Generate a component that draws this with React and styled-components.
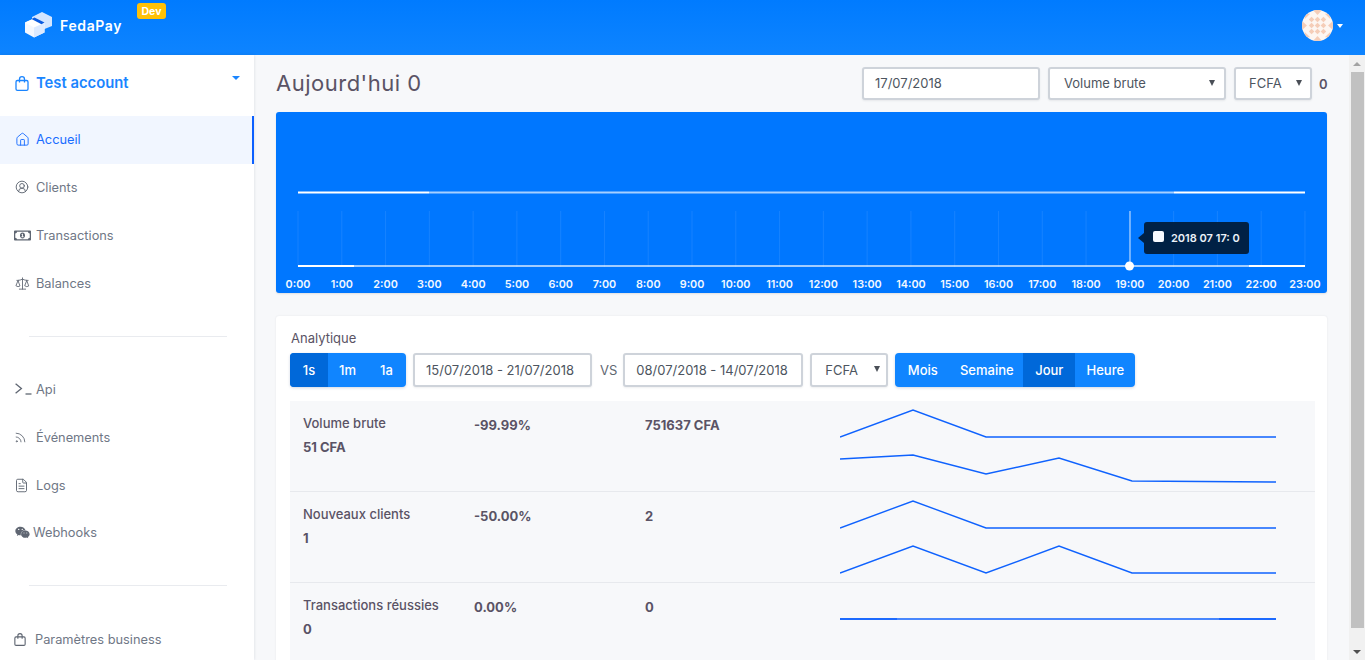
import React from 'react';
import styled, { createGlobalStyle } from 'styled-components';
import { Home, CircleUserRound, Scale, Rss, FileText } from 'lucide-react';
import { FaRegMoneyBillAlt, FaWeixin } from 'react-icons/fa';

const Global = createGlobalStyle`
  html, body { margin: 0; height: 100%; overflow: hidden; }
  body { font-family: Inter, "Noto Sans", sans-serif; color: #5a5365; background: #f7f8fa; }
  * { box-sizing: border-box; }
`;

const Page = styled.div`display: flex; flex-direction: column; height: 660px; width: 1365px; overflow: hidden;`;
const Header = styled.header`
  height: 55px; flex: none; display: flex; align-items: center; justify-content: space-between;
  background: linear-gradient(180deg, #007bff, #0e84ff); padding: 0 21px 4px 24px;
`;
const Brand = styled.div`display: flex; align-items: center; position: relative; height: 100%; padding-bottom: 1px;`;
const BrandName = styled.span`color: #fff; font-weight: 600; font-size: 14px; letter-spacing: 0.62px; margin-left: 7px; margin-top: 1px;`;
const DevBadge = styled.span`
  position: absolute; left: 113px; top: 3px; width: 29px; height: 16px; background: #ffc107; border-radius: 3px;
  color: #fff; font-size: 10.5px; font-weight: 700; display: flex; align-items: center; justify-content: center;
`;
const UserBox = styled.div`display: flex; align-items: center; gap: 4px; margin-left: -1px; transform: translateX(-1px);`;
const Avatar = styled.svg`width: 31px; height: 31px; border-radius: 50%; display: block; background: #fdf6f2;`;
const Caret = styled.span`
  width: 0; height: 0; border-left: 3.5px solid transparent; border-right: 3.5px solid transparent;
  border-top: 4px solid #fff;
`;
const Body = styled.div`flex: 1; display: flex; min-height: 0;`;
const Sidebar = styled.nav`
  width: 254px; flex: none; background: #fff; box-shadow: 0 0 3px rgba(30, 40, 70, 0.14); position: relative; z-index: 1;
  display: flex; flex-direction: column;
`;
const Account = styled.div`
  height: 61px; flex: none; display: flex; align-items: center; color: #1a85ff; font-size: 14.8px; font-weight: 600;
  padding: 0 14px 5px 15px; gap: 7px; position: relative;
`;
const AccountCaret = styled.span`
  position: absolute; right: 14px; top: 21px; width: 0; height: 0;
  border-left: 4.5px solid transparent; border-right: 4.5px solid transparent; border-top: 4.5px solid #1a85ff;
`;
const Item = styled.a`
  height: 48px; display: flex; align-items: center; font-size: 12.8px; padding-left: 15px; flex: none;
  padding-bottom: ${p => p.$lift || 0}px;
  color: ${p => (p.$active ? '#1a6dff' : '#6f7786')};
  background: ${p => (p.$active ? '#f1f6ff' : 'transparent')};
  border-right: ${p => (p.$active ? '2px solid #0b5fff' : '0')};
`;
const IconSlot = styled.span`
  width: ${p => p.$w || 21}px; margin-left: ${p => p.$ml || 0}px; flex: none; display: flex; align-items: center;
  color: ${p => (p.$active ? '#1a6dff' : '#5f6672')};
`;
const Rule = styled.hr`border: 0; border-top: 1px solid #e9ebef; margin: ${p => p.$m}; width: 198px; margin-left: 29px; flex: none;`;
const Main = styled.main`flex: 1; min-width: 0; padding: 12px 22px 0 22px; overflow: hidden; background: #f7f8fa;`;
const TopRow = styled.div`display: flex; align-items: center; height: 33px; justify-content: space-between;`;
const Title = styled.h1`margin: 0; font-size: 22px; font-weight: 400; color: #5a5365; line-height: 33px; letter-spacing: 0.5px;`;
const Controls = styled.div`display: flex; align-items: center; gap: 8px; font-size: 13px;`;
const Field = styled.div`
  width: ${p => p.$w}px; height: ${p => p.$h || 33}px; flex: none; background: #fff; border: 2px solid #ced3da; border-radius: 3px;
  box-shadow: 0 1px 2px rgba(40,50,70,.08);
  margin-left: ${p => p.$ml || 0}px;
  display: flex; align-items: center; justify-content: space-between; font-size: 13px; color: #4d5560;
  padding: 0 ${p => p.$pr ?? 10}px 1px ${p => p.$pl ?? 11}px; white-space: nowrap;
`;
const Arrow = styled.span`
  width: 0; height: 0; border-left: 3.5px solid transparent; border-right: 3.5px solid transparent; border-top: 6px solid #4a4f57;
  margin-top: -1px;
`;
const Count = styled.span`font-weight: 600; color: #5a5365; margin-left: -1px; width: 8px;`;
const ChartBox = styled.div`
  margin-top: 12px; height: 181px; background: #0077ff; border-radius: 3px; position: relative; overflow: hidden;
  box-shadow: 0 1px 2px rgba(0,0,0,.1);
`;
const ChartSvg = styled.svg`display: block; width: 100%; height: 100%; font-family: Inter, sans-serif;`;
const Tooltip = styled.div`
  position: absolute; left: 868px; top: 110px; width: 105px; height: 32px; background: #001f3f; opacity: .97; border-radius: 3px;
  display: flex; align-items: center; color: #f4f6f9; font-size: 11px; font-weight: 600; padding-left: 9px; gap: 7px; white-space: nowrap;
  &::before {
    content: ''; position: absolute; left: -6px; top: 11px; border-top: 5px solid transparent; border-bottom: 5px solid transparent;
    border-right: 6px solid #001f3f;
  }
`;
const Swatch = styled.span`width: 11px; height: 11px; border-radius: 2px; background: #fff; flex: none; margin-top: -3px;`;
const Card = styled.section`
  margin-top: 23px; background: #fff; border-radius: 3px; box-shadow: 0 0 2px rgba(40,50,70,.1); padding: 15px 12px 0 14px; height: 360px;
`;
const CardTitle = styled.div`font-size: 13px; color: #5a5365; line-height: 14px; padding-left: 1px;`;
const FilterRow = styled.div`display: flex; align-items: center; margin-top: 8px; height: 34px;`;
const BtnGroup = styled.div`
  display: flex; height: 34px; border-radius: 4px; overflow: hidden; background: #1085ff; box-shadow: 0 1px 3px rgba(30,60,120,.2); flex: none;
  margin-left: ${p => p.$ml || 0}px;
`;
const Btn = styled.button`
  border: 0; margin: 0; height: 34px; width: ${p => p.$w}px; padding: 0 0 1px; background: ${p => (p.$on ? '#0068d9' : 'transparent')};
  color: #fff; font: 500 13px Inter, sans-serif;
`;
const Vs = styled.span`font-size: 13px; color: #5f6772; margin: 0 6px 0 8px; line-height: 1;`;
const Table = styled.div`margin-top: 14px; background: #f7f8fa;`;
const Row = styled.div`
  height: 91px; display: grid; grid-template-columns: 171px 171px 195px 1fr; padding-left: 13px;
  border-bottom: 1px solid #e7e9ed; &:last-child { border-bottom: 0; }
  color: #5a5365; font-size: 13px;
`;
const Cell = styled.div`padding-top: 15px; font-weight: 700; line-height: 18px;`;
const LabelCell = styled.div`padding-top: 13.5px;`;
const Name = styled.div`font-size: 13px; font-weight: 500; line-height: 16px;`;
const Val = styled.div`margin-top: 8px; font-weight: 700; font-size: 13px; line-height: 16px;`;
const Spark = styled.svg`display: block; width: 436px; height: 90px;`;
const Scrollbar = styled.div`width: 16px; flex: none; background: #f1f1f1; display: flex; flex-direction: column; justify-content: space-between;`;
const ScrollTop = styled.div`display: flex; flex-direction: column;`;
const ScrollBtn = styled.div`
  height: 17px; flex: none; display: flex; align-items: center; justify-content: center;
  &::before {
    content: ''; border-left: 4px solid transparent; border-right: 4px solid transparent;
    ${p => (p.$down ? 'border-top: 4px solid #505050;' : 'border-bottom: 4px solid #a3a3a3;')}
  }
`;
const ScrollThumb = styled.div`flex: none; height: 556px; background: #c1c1c1; margin: 0 1px 0 2px;`;

const diamonds = [
  [10.5, 10.5], [17, 10.5], [23.5, 10.5],
  [10.5, 17], [17, 17], [23.5, 17],
  [10.5, 23.5], [17, 23.5], [23.5, 23.5],
];
const AvatarPattern = () => (
  <>
    {diamonds.map(([x, y]) => (
      <polygon key={`${x}-${y}`} points={`${x},${y - 3} ${x + 3},${y} ${x},${y + 3} ${x - 3},${y}`} fill="#f5cdb8" />
    ))}
    <polygon points="12,0 22,0 17,5.5" fill="#f5cdb8" />
    <polygon points="12,34 22,34 17,28.5" fill="#f5cdb8" />
    <polygon points="0,12 0,22 5.5,17" fill="#f5cdb8" />
    <polygon points="34,12 34,22 28.5,17" fill="#f5cdb8" />
    <polygon points="3,4 9,4 3,10" fill="#f5cdb8" />
    <polygon points="31,4 25,4 31,10" fill="#f5cdb8" />
    <polygon points="3,30 9,30 3,24" fill="#f5cdb8" />
    <polygon points="31,30 25,30 31,24" fill="#f5cdb8" />
  </>
);

const Logo = () => (
  <svg width="29" height="26" viewBox="0 0 29 26">
    <polygon points="8,5 18,0 28,5 28,14 18,18 8,13" fill="#d4e6ff" />
    <polygon points="1,10.5 11,6 20.5,11 20.5,20.5 10,25.5 1,20.5" fill="#f4f8ff" />
    <polygon points="1,10.5 11,6 20.5,11 10,15.5" fill="#ffffff" />
    <polygon points="10,15.5 20.5,11 20.5,20.5 10,25.5" fill="#dceaff" />
    <polygon points="7.5,7 10.5,5.5 20.5,10.5 17.5,12.3" fill="#0a5be0" />
  </svg>
);

const Terminal = () => (
  <svg width="17" height="12" viewBox="0 0 17 12" fill="none" stroke="currentColor" strokeWidth="1.3">
    <path d="M0.6 0.8 L6.4 5.5 L0.6 10.2" />
    <path d="M10.5 11 H16.5" />
  </svg>
);

const Bag = ({ size }) => (
  <svg width={size} height={size + 1} viewBox="0 0 14 15" fill="none" stroke="currentColor" strokeWidth="1.3">
    <rect x="1" y="4.5" width="12" height="9.8" rx="1.4" />
    <path d="M4.5 6.5 V3.2 a2.5 2.5 0 0 1 5 0 V6.5" />
  </svg>
);

const hours = Array.from({ length: 24 }, (_, i) => i);
const xOf = i => 22 + i * 43.78;

const Chart = () => (
  <ChartSvg viewBox="0 0 1051 181">
    {hours.map(i => (
      <line key={i} x1={xOf(i)} x2={xOf(i)} y1="99" y2="155" stroke="#fff" strokeOpacity="0.09" />
    ))}
    <line x1="854" x2="854" y1="99" y2="155" stroke="#fff" strokeOpacity="0.55" strokeWidth="1.5" />
    <line x1="22" x2="153" y1="80.5" y2="80.5" stroke="#fff" strokeWidth="2" />
    <line x1="153" x2="898" y1="80.5" y2="80.5" stroke="#fff" strokeOpacity="0.65" strokeWidth="2" />
    <line x1="898" x2="1029" y1="80.5" y2="80.5" stroke="#fff" strokeWidth="2" />
    <line x1="22" x2="78" y1="154" y2="154" stroke="#fff" strokeWidth="2" />
    <line x1="78" x2="973" y1="154" y2="154" stroke="#fff" strokeOpacity="0.85" strokeWidth="1.6" />
    <line x1="973" x2="1029" y1="154" y2="154" stroke="#fff" strokeWidth="2" />
    <circle cx="853.5" cy="154" r="4.5" fill="#fff" />
    {hours.map(i => (
      <text key={i} x={xOf(i)} y="176" fill="#f2f7ff" fontSize="10.8" fontWeight="600" textAnchor="middle">{i}:00</text>
    ))}
  </ChartSvg>
);

const SparkLine = ({ d }) => <path d={d} fill="none" stroke="#0f62fe" strokeWidth="1.4" />;

const rows = [
  {
    name: 'Volume brute', val: '51 CFA', pct: '-99.99%', cmp: '751637 CFA',
    lines: ['M0 36 L73 9 L146 36 L436 36', 'M0 58 L73 54 L146 73 L219 57 L292 80 L436 81'],
  },
  {
    name: 'Nouveaux clients', val: '1', pct: '-50.00%', cmp: '2',
    lines: ['M0 36 L73 9 L146 36 L436 36', 'M0 81 L73 54 L146 81 L219 54 L292 81 L436 81'],
  },
  {
    name: 'Transactions réussies', val: '0', pct: '0.00%', cmp: '0',
    lines: ['M0 36 L436 36', 'M0 36 L57 36 M379 36 L436 36'],
  },
];

const Nav = ({ icon, w, ml, lift, active, children }) => (
  <Item $active={active} $lift={lift}><IconSlot $w={w} $ml={ml} $active={active}>{icon}</IconSlot>{children}</Item>
);

export default function App() {
  return (
    <Page>
      <Global />
      <Header>
        <Brand>
          <Logo />
          <BrandName>FedaPay</BrandName>
          <DevBadge>Dev</DevBadge>
        </Brand>
        <UserBox>
          <Avatar viewBox="0 0 34 34"><AvatarPattern /></Avatar>
          <Caret />
        </UserBox>
      </Header>
      <Body>
        <Sidebar>
          <Account>
            <Bag size={14} />
            Test account
            <AccountCaret />
          </Account>
          <Nav active lift={2} icon={<Home size={15} strokeWidth={1.5} />}>Accueil</Nav>
          <Nav lift={2} icon={<CircleUserRound size={14} strokeWidth={1.6} />}>Clients</Nav>
          <Nav lift={2} ml={-1} w={22} icon={<FaRegMoneyBillAlt size={17} />}>Transactions</Nav>
          <Nav lift={2} icon={<Scale size={15} strokeWidth={1.4} />}>Balances</Nav>
          <Rule $m="28px 0 28px" />
          <Nav icon={<Terminal />}>Api</Nav>
          <Nav ml={-1} w={22} icon={<Rss size={13} strokeWidth={1.6} />}>Événements</Nav>
          <Nav ml={-1} w={22} icon={<FileText size={15} strokeWidth={1.5} />}>Logs</Nav>
          <Nav w={18} lift={2} icon={<FaWeixin size={15} />}>Webhooks</Nav>
          <Rule $m="28px 0 29px" />
          <Nav ml={-1} w={21} icon={<Bag size={12} />}>Paramètres business</Nav>
        </Sidebar>
        <Main>
          <TopRow>
            <Title>Aujourd'hui 0</Title>
            <Controls>
              <Field $w={178}>17/07/2018</Field>
              <Field $w={178} $pl={14} $pr={9}>Volume brute<Arrow /></Field>
              <Field $w={78} $pl={13} $pr={8}>FCFA<Arrow /></Field>
              <Count>0</Count>
            </Controls>
          </TopRow>
          <ChartBox>
            <Chart />
            <Tooltip><Swatch />2018 07 17: 0</Tooltip>
          </ChartBox>
          <Card>
            <CardTitle>Analytique</CardTitle>
            <FilterRow>
              <BtnGroup>
                <Btn $w={38} $on>1s</Btn>
                <Btn $w={39}>1m</Btn>
                <Btn $w={39}>1a</Btn>
              </BtnGroup>
              <Field $w={179} $h={34} $ml={7}>15/07/2018 - 21/07/2018</Field>
              <Vs>VS</Vs>
              <Field $w={180} $h={34}>08/07/2018 - 14/07/2018</Field>
              <Field $w={78} $h={34} $pl={13} $pr={6} $ml={7}>FCFA<Arrow /></Field>
              <BtnGroup $ml={7}>
                <Btn $w={55}>Mois</Btn>
                <Btn $w={73}>Semaine</Btn>
                <Btn $w={52} $on>Jour</Btn>
                <Btn $w={60}>Heure</Btn>
              </BtnGroup>
            </FilterRow>
            <Table>
              {rows.map(r => (
                <Row key={r.name}>
                  <LabelCell><Name>{r.name}</Name><Val>{r.val}</Val></LabelCell>
                  <Cell>{r.pct}</Cell>
                  <Cell>{r.cmp}</Cell>
                  <Spark viewBox="0 0 436 90">
                    {r.lines.map(d => <SparkLine key={d} d={d} />)}
                  </Spark>
                </Row>
              ))}
            </Table>
          </Card>
        </Main>
        <Scrollbar>
          <ScrollTop>
            <ScrollBtn />
            <ScrollThumb />
          </ScrollTop>
          <ScrollBtn $down />
        </Scrollbar>
      </Body>
    </Page>
  );
}
